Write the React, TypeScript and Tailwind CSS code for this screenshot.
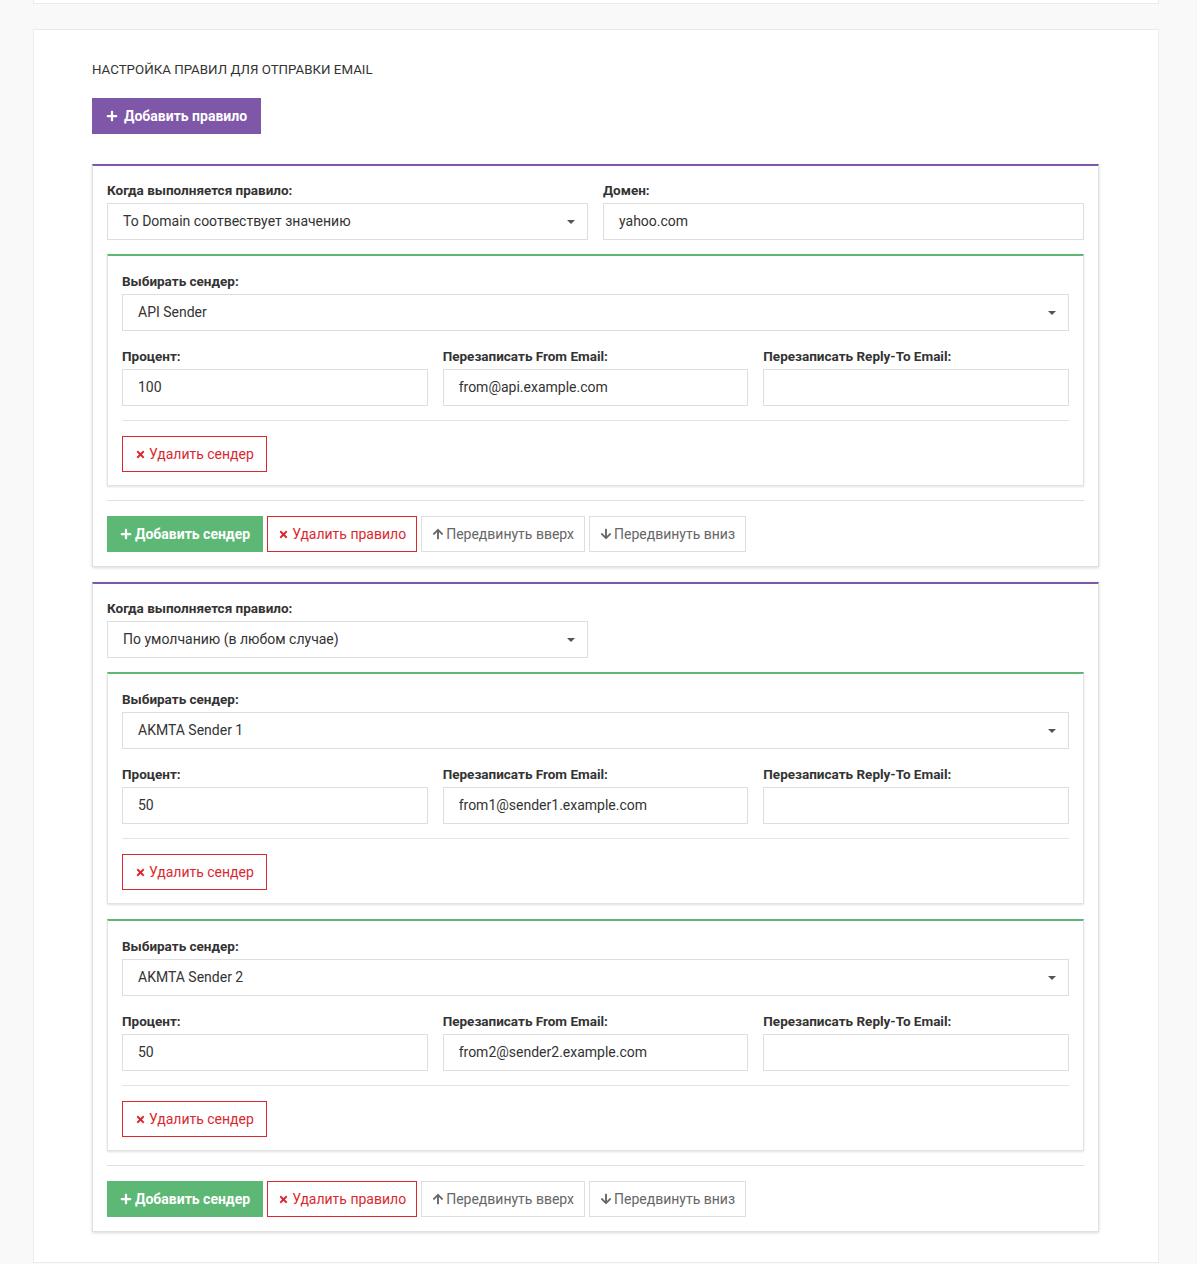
import { FaPlus, FaTimes, FaArrowUp, FaArrowDown } from "react-icons/fa"

type Sender = { name: string; percent: string; from: string; replyTo: string }
type Rule = { condition: string; domain?: string; senders: Sender[] }

const rules: Rule[] = [
  {
    condition: "To Domain соотвествует значению",
    domain: "yahoo.com",
    senders: [{ name: "API Sender", percent: "100", from: "from@api.example.com", replyTo: "" }],
  },
  {
    condition: "По умолчанию (в любом случае)",
    senders: [
      { name: "AKMTA Sender 1", percent: "50", from: "from1@sender1.example.com", replyTo: "" },
      { name: "AKMTA Sender 2", percent: "50", from: "from2@sender2.example.com", replyTo: "" },
    ],
  },
]

function Label({ children }: { children: React.ReactNode }) {
  return <div className="text-[13.5px] font-bold text-[#333] leading-[13px] mb-[6px]">{children}</div>
}

function Field({ value }: { value: string }) {
  return (
    <div className="h-[37px] border border-[#dedede] bg-white px-[15px] flex items-center text-[14px] text-[#333]">
      {value}
    </div>
  )
}

function Select({ value }: { value: string }) {
  return (
    <div className="h-[37px] border border-[#dedede] bg-white pl-[15px] pr-[12px] flex items-center justify-between text-[14px] text-[#333]">
      <span>{value}</span>
      <span className="w-0 h-0 border-l-[4px] border-r-[4px] border-t-[4px] border-l-transparent border-r-transparent border-t-[#555]" />
    </div>
  )
}

function SenderBox({ sender }: { sender: Sender }) {
  return (
    <div className="border border-[#e3e3e3] border-t-2 border-t-[#5cb874] shadow-[0_1px_2px_rgba(0,0,0,0.12)] px-[14px] pt-[19px] pb-[13px] bg-white">
      <Label>Выбирать сендер:</Label>
      <Select value={sender.name} />
      <div className="grid grid-cols-3 gap-[15px] mt-[19px]">
        <div>
          <Label>Процент:</Label>
          <Field value={sender.percent} />
        </div>
        <div>
          <Label>Перезаписать From Email:</Label>
          <Field value={sender.from} />
        </div>
        <div>
          <Label>Перезаписать Reply-To Email:</Label>
          <Field value={sender.replyTo} />
        </div>
      </div>
      <div className="border-t border-[#e3e3e3] mt-[14px] mb-[15px]" />
      <button className="h-[36px] px-[12px] border border-[#d9292f] text-[#d9292f] text-[14px] flex items-center gap-[3px] bg-white">
        <FaTimes className="w-[11px] h-[11px]" />
        Удалить сендер
      </button>
    </div>
  )
}

function RuleBox({ rule }: { rule: Rule }) {
  return (
    <div className="border border-[#e0e0e0] border-t-2 border-t-[#7e57a8] shadow-[0_1px_3px_rgba(0,0,0,0.15)] px-[14px] pt-[18px] pb-[14px] bg-white">
      <div className="grid grid-cols-2 gap-[15px]">
        <div>
          <Label>Когда выполняется правило:</Label>
          <Select value={rule.condition} />
        </div>
        {rule.domain !== undefined && (
          <div>
            <Label>Домен:</Label>
            <Field value={rule.domain} />
          </div>
        )}
      </div>
      <div className="flex flex-col gap-[15px] mt-[14px]">
        {rule.senders.map((s, i) => (
          <SenderBox key={i} sender={s} />
        ))}
      </div>
      <div className="border-t border-[#e0e0e0] mt-[14px] mb-[15px]" />
      <div className="flex items-center gap-[4px]">
        <button className="h-[36px] px-[13px] bg-[#5cb874] text-white text-[14px] font-bold flex items-center gap-[3px]">
          <FaPlus className="w-[12px] h-[12px]" />
          Добавить сендер
        </button>
        <button className="h-[36px] px-[10px] border border-[#d9292f] text-[#d9292f] text-[14px] flex items-center gap-[3px] bg-white">
          <FaTimes className="w-[11px] h-[11px]" />
          Удалить правило
        </button>
        <button className="h-[36px] px-[10px] border border-[#dedede] text-[#666] text-[14px] flex items-center gap-[2px] bg-white">
          <FaArrowUp className="w-[12px] h-[12px]" />
          Передвинуть вверх
        </button>
        <button className="h-[36px] px-[10px] border border-[#dedede] text-[#666] text-[14px] flex items-center gap-[2px] bg-white">
          <FaArrowDown className="w-[12px] h-[12px]" />
          Передвинуть вниз
        </button>
      </div>
    </div>
  )
}

export default function App() {
  return (
    <div className="min-h-[1264px] bg-[#f9f9f9] px-[33px] pr-[38px] font-['Roboto',sans-serif]">
      <div className="h-[4px] bg-white border border-t-0 border-[#ebebeb]" />
      <div className="mt-[25px] bg-white border border-[#ebebeb] pl-[58px] pr-[59px] pt-[32px] pb-[30px]">
        <div className="text-[13.3px] text-[#333] uppercase leading-[16px]">Настройка правил для отправки Email</div>
        <button className="mt-[20px] h-[36px] px-[14px] bg-[#7e57a8] text-white text-[14px] font-bold flex items-center gap-[6px]">
          <FaPlus className="w-[12px] h-[12px]" />
          Добавить правило
        </button>
        <div className="flex flex-col gap-[15px] mt-[30px]">
          {rules.map((r, i) => (
            <RuleBox key={i} rule={r} />
          ))}
        </div>
      </div>
    </div>
  )
}
